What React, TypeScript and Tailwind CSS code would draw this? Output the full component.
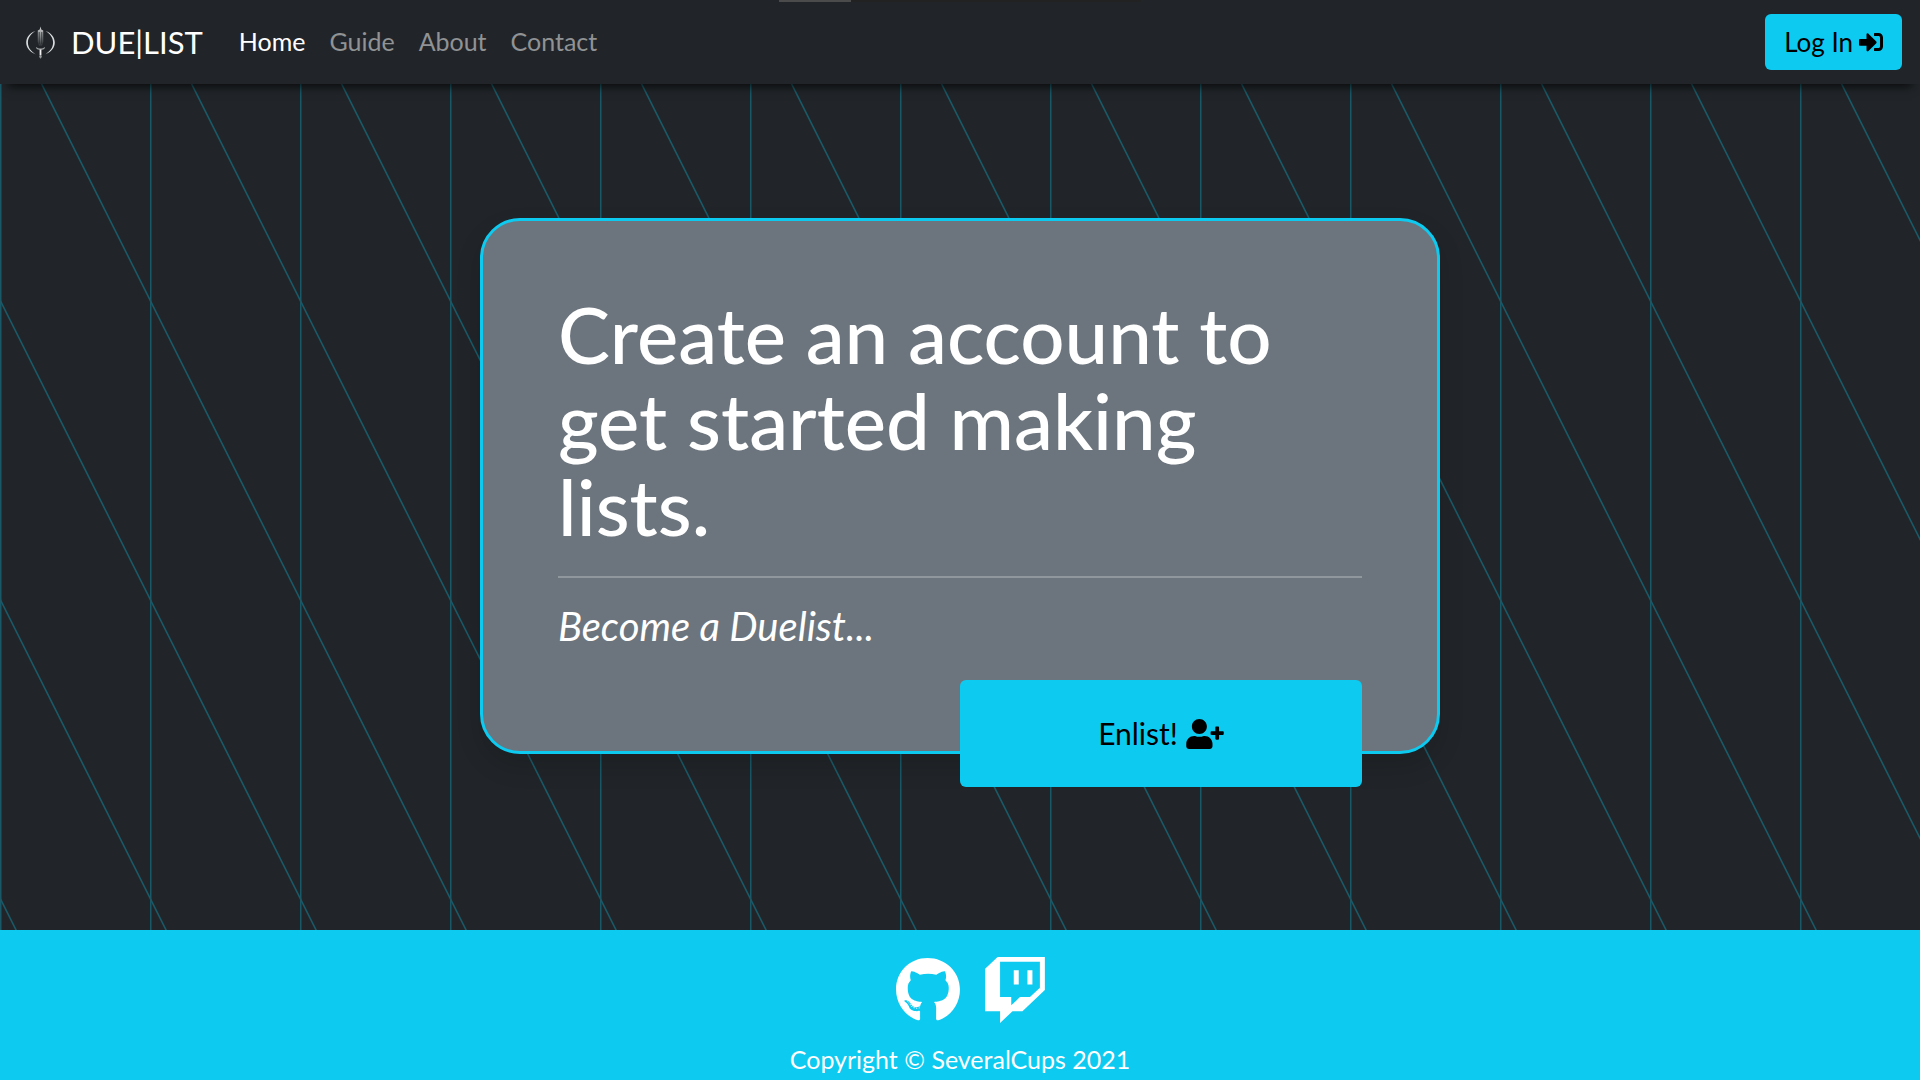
import { FaGithub, FaSignInAlt, FaTwitch, FaUserPlus } from "react-icons/fa";

const links = [
  { label: "Home", active: true },
  { label: "Guide", active: false },
  { label: "About", active: false },
  { label: "Contact", active: false },
];

function SwordLogo() {
  return (
    <svg viewBox="0 0 30 34" className="h-[34px] w-[30px]" fill="none" aria-hidden="true">
      <defs>
        <linearGradient id="blade" x1="0" y1="0" x2="0" y2="1">
          <stop offset="0" stopColor="#d4d5d6" />
          <stop offset="0.5" stopColor="#85888a" />
          <stop offset="1" stopColor="#2b2f33" />
        </linearGradient>
      </defs>
      <path d="M10.500 6C5 7.800 1.200 12.300 1.200 17.600S5 27.400 10.500 29.200C6 26.400 2.900 22.600 2.900 17.600S6 8.800 10.500 6Z" fill="#dcdddf" />
      <path d="M20.500 6c5.500 1.800 9.300 6.300 9.300 11.600s-3.800 9.800-9.300 11.600c4.500-2.800 7.600-6.600 7.600-11.600S25 8.800 20.500 6Z" fill="#dcdddf" />
      <path d="M15.500 1.500 16.300 4.500l1.900 1V17l-1.200 4h-3l-1.200-4V5.500l1.900-1Z" fill="url(#blade)" />
      <path d="M14.200 7v12M16.800 7v12" stroke="#212529" strokeWidth="0.800" />
      <path d="M11.300 22.500c.7 1.200 1.800 1.600 3 1.600h2.400c1.200 0 2.300-.4 3-1.600" stroke="#a9abad" strokeWidth="1.100" />
      <path d="M15.500 24.500v6" stroke="#f2f2f2" strokeWidth="1.800" />
      <path d="m15.500 29.800 1.500 1.900-1.500 2.100-1.500-2.100Z" fill="#96989a" />
    </svg>
  );
}

function LineBackdrop() {
  return (
    <svg className="absolute inset-0 -z-10 h-full w-full" aria-hidden="true">
      <defs>
        <pattern id="lines" x="0" y="-83" width="150" height="299" patternUnits="userSpaceOnUse">
          <path d="M-1 -2 151 301M-1 297 1 301M149 -2 151 2" stroke="#195a68" strokeWidth="1.500" />
          <path d="M0.750 0V299" stroke="#195866" strokeWidth="1.500" />
        </pattern>
      </defs>
      <rect width="100%" height="100%" fill="url(#lines)" />
    </svg>
  );
}

export default function App() {
  return (
    <div className="flex min-h-screen flex-col bg-[#212529] font-['Lato',sans-serif] text-[25px] text-white">
      <header className="relative z-10 flex h-[84px] items-center bg-[#212529] pr-[18px] pl-[25px] shadow-[0_10px_10px_-8px_#000000d0]">
        <div className="absolute top-0 left-1/2 h-0.5 w-[362px] -translate-x-1/2 bg-[#222222]">
          <div className="h-full w-[72px] bg-[#4b4b4b]" />
        </div>
        <a href="#" className="mr-9 flex items-center gap-4 text-[31px]">
          <SwordLogo />
          DUE|LIST
        </a>
        <nav className="flex grow items-center gap-6">
          {links.map((link) => (
            <a key={link.label} href="#" className={link.active ? "text-white" : "text-[#909294]"}>
              {link.label}
            </a>
          ))}
        </nav>
        <button className="flex h-14 items-center gap-1.5 rounded-md bg-[#0dcaf0] px-[19px] text-[26px] text-black">
          Log In
          <FaSignInAlt className="size-6" />
        </button>
      </header>

      <main className="relative isolate flex grow justify-center pt-[134px] pb-36">
        <LineBackdrop />
        <section className="flex w-1/2 flex-col self-start rounded-[40px] border-3 border-[#0dcaf0] bg-[#6c757d] px-[75px] pt-[70px] shadow-[0_12px_24px_#00000026]">
          <h1 className="text-[78px] leading-[86px] font-medium">
            Create an account to get started making lists.
          </h1>
          <hr className="mt-[27px] border-t-2 border-[#90979d]" />
          <p className="mt-6 text-[40px] leading-[48px] italic">Become a Duelist...</p>
          <button className="mt-[30px] -mb-9 flex h-[107px] w-1/2 items-center justify-center gap-2 self-end rounded-md bg-[#0dcaf0] text-[30px] text-black">
            Enlist!
            <FaUserPlus className="h-[30px] w-[38px]" />
          </button>
        </section>
      </main>

      <footer className="flex h-[150px] flex-col items-center bg-[#0dcaf0] pt-[27px]">
        <div className="flex gap-[22px] pl-6 text-[66px]">
          <a href="#" aria-label="GitHub"><FaGithub className="w-16" /></a>
          <a href="#" aria-label="Twitch"><FaTwitch /></a>
        </div>
        <p className="mt-[18px] leading-9">Copyright © SeveralCups 2021</p>
      </footer>
    </div>
  );
}
